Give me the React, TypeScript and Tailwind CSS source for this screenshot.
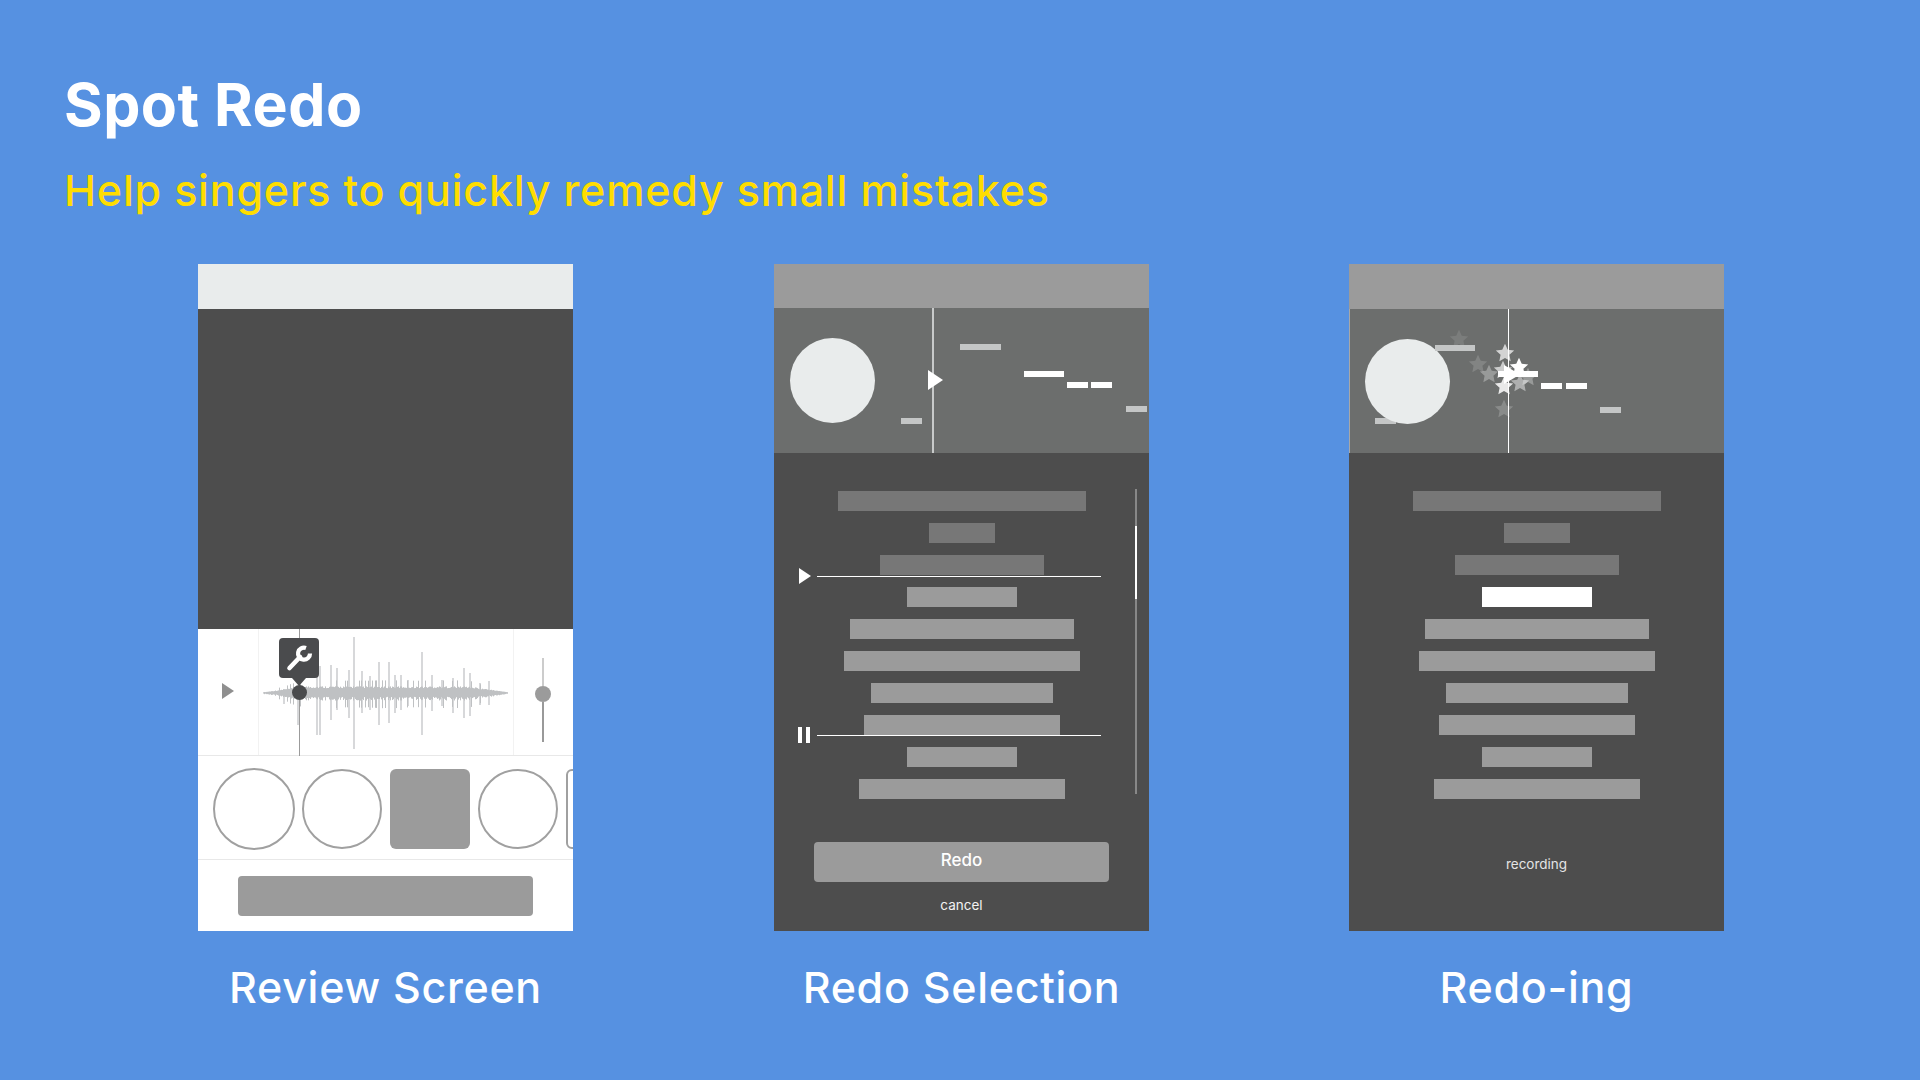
const LYRICS = [248, 66, 164, 110, 224, 236, 182, 196, 110, 206];

// spikes read off the reference: x offset, top and bottom distance from the centre line
const SPIKES: [number, number, number][] = [
  [21, 4, 11], [35, 7, 32], [54, 20, 42], [57, 27, 42], [68, 28, 27], [74, 25, 17], [86, 23, 25], [91, 56, 56],
  [99, 22, 20], [107, 17, 17], [116, 31, 32], [126, 31, 30], [132, 18, 20], [138, 18, 17], [145, 13, 13],
  [159, 41, 42], [169, 18, 18], [179, 13, 13], [190, 15, 20], [201, 25, 25], [207, 20, 23], [217, 10, 12], [226, 12, 12],
];

function Waveform() {
  const bars: [number, number, number][] = [];
  for (let i = 0; i < 245; i++) {
    const edge = Math.min(i / 40, (245 - i) / 40, 1);
    const noise = Math.abs(Math.sin(i * 12.9898) * 43758.5453) % 1;
    const kick = noise > 0.86 ? 1.9 : 1;
    const h = 0.7 + edge * 5.5 * (0.75 + noise * 0.4) * kick;
    bars.push([i + 0.5, h, h * (0.8 + noise * 0.4)]);
  }
  return (
    <svg width="245" height="120" viewBox="0 0 245 120" className="block">
      {SPIKES.map(([x, t, b], i) => (
        <line key={i} x1={x} x2={x} y1={60 - t} y2={60 + b} stroke="#cdcfd1" strokeWidth="1.6" />
      ))}
      {bars.map(([x, t, b], i) => (
        <line key={i} x1={x} x2={x} y1={60 - t} y2={60 + b} stroke="#bfc1c3" strokeWidth="1" />
      ))}
    </svg>
  );
}

function Tri({ className }: { className: string }) {
  return (
    <svg viewBox="0 0 12 16" preserveAspectRatio="none" className={className}>
      <path d="M0 0L12 8L0 16Z" fill="currentColor" />
    </svg>
  );
}

function Star({ x, y, opacity }: { x: number; y: number; opacity: number }) {
  return (
    <svg
      viewBox="0 0 24 24"
      width={20}
      height={20}
      className="absolute text-white"
      style={{ left: x - 10, top: y - 10, opacity }}
    >
      <path d="M12 1l3.300 7 7.700.9-5.700 5.300 1.500 7.600L12 18l-6.800 3.800 1.500-7.600L1 8.900 8.700 8z" fill="currentColor" />
    </svg>
  );
}

function Note({ x, y, w, dim }: { x: number; y: number; w: number; dim?: boolean }) {
  return (
    <div
      className={dim ? "absolute h-[6px] bg-[#c4c6c6]" : "absolute h-[6px] bg-white"}
      style={{ left: x, top: y, width: w }}
    />
  );
}

function Lyrics({ highlight }: { highlight?: boolean }) {
  return (
    <div className="flex flex-col items-center gap-3 pt-[38px]">
      {LYRICS.map((w, i) => {
        const bg = i < 3 ? "bg-[#777777]" : highlight && i === 3 ? "bg-white" : "bg-[#9b9b9b]";
        return <div key={i} className={`h-5 ${bg}`} style={{ width: w }} />;
      })}
    </div>
  );
}

function ReviewScreen() {
  return (
    <div className="flex h-[667px] w-[375px] flex-col bg-white">
      <div className="h-[45px] shrink-0 bg-[#e9ecec]" />
      <div className="h-[320px] shrink-0 bg-[#4d4d4d]" />
      <div className="relative flex h-[127px] shrink-0 border-b border-[#e8e8e8]">
        <div className="flex w-[61px] shrink-0 items-center justify-center border-r border-[#f2f2f2] pb-[2px]">
          <Tri className="h-4 w-3 text-[#8f8f8f]" />
        </div>
        <div className="flex flex-1 items-center justify-center pr-px pt-[2px]">
          <Waveform />
        </div>
        <div className="flex w-[60px] shrink-0 flex-col items-center border-l border-[#f2f2f2] pr-px pt-[29px]">
          <div className="h-[28px] w-[2px] bg-[#cccccc]" />
          <div className="size-4 rounded-full bg-[#9b9b9b]" />
          <div className="h-[40px] w-[2px] bg-[#999999]" />
        </div>
        <div className="absolute bottom-[-1px] left-[101px] top-0 w-px bg-[#9b9b9b]" />
        <div className="absolute left-[81px] top-[9px] flex w-10 flex-col items-center">
          <div className="flex size-10 items-center justify-center rounded bg-[#4a4b4d]">
            <svg viewBox="0 0 40 40" className="size-10" fill="none" stroke="white" strokeWidth="4.200">
              <path d="M10.500 30L21 19" strokeLinecap="round" strokeWidth="4.600" />
              <path d="M27 10A6 6 0 1 0 31 15.500" />
            </svg>
          </div>
          <svg viewBox="0 0 14 8" className="h-2 w-[14px]">
            <path d="M0 0H14L7 8Z" fill="#4a4b4d" />
          </svg>
          <div className="-mt-px size-[15px] rounded-full bg-[#4a4b4d]" />
        </div>
      </div>
      <div className="flex h-[104px] shrink-0 items-center gap-2 overflow-hidden border-b border-[#e8e8e8] pl-[15px] pt-[2px]">
        <div className="-mr-px size-[82px] shrink-0 rounded-full border-2 border-[#a0a0a0]" />
        <div className="size-20 shrink-0 rounded-full border-2 border-[#a0a0a0]" />
        <div className="size-20 shrink-0 rounded-md bg-[#9b9b9b]" />
        <div className="size-20 shrink-0 rounded-full border-2 border-[#a0a0a0]" />
        <div className="h-20 w-20 shrink-0 rounded-md border-2 border-[#a0a0a0]" />
      </div>
      <div className="flex flex-1 justify-center pt-4">
        <div className="h-10 w-[295px] rounded bg-[#9b9b9b]" />
      </div>
    </div>
  );
}

function RedoSelection() {
  return (
    <div className="flex h-[667px] w-[375px] flex-col bg-[#4d4d4d]">
      <div className="h-11 shrink-0 bg-[#9b9b9b]" />
      <div className="relative h-[145px] shrink-0 bg-[#6c6e6d]">
        <div className="absolute left-4 top-[30px] size-[85px] rounded-full bg-[#e9ecec]" />
        <Note x={186} y={36} w={41} dim />
        <Note x={127} y={110} w={21} dim />
        <Note x={250} y={63} w={40} />
        <Note x={293} y={74} w={21} />
        <Note x={317} y={74} w={21} />
        <Note x={352} y={98} w={21} dim />
        <div className="absolute left-[158px] top-0 h-full w-[2px] bg-[#c8caca]" />
        <Tri className="absolute left-[154px] top-[62px] h-5 w-[15px] text-white" />
      </div>
      <div className="relative flex flex-1 flex-col items-center">
        <div className="w-full">
          <Lyrics />
        </div>
        <div className="absolute left-[25px] top-[115px] flex items-center gap-[6px]">
          <Tri className="h-4 w-3 text-white" />
          <div className="h-px w-[284px] bg-white" />
        </div>
        <div className="absolute left-6 top-[274px] flex items-center">
          <div className="flex h-4 w-3 justify-between">
            <div className="w-1 bg-white" />
            <div className="w-1 bg-white" />
          </div>
          <div className="ml-[7px] mt-[1px] h-px w-[284px] bg-white" />
        </div>
        <div className="absolute left-[361px] top-[36px] h-[305px] w-[2px] bg-[#888888]">
          <div className="mt-[37px] h-[73px] w-[2px] bg-white" />
        </div>
        <div className="mt-[43px] flex h-10 w-[295px] items-center justify-center rounded bg-[#9b9b9b] pb-[3px] text-[17px] font-medium text-white">
          Redo
        </div>
        <div className="mt-[13px] text-[13.500px] leading-5 text-[#f2f2f2]">cancel</div>
      </div>
    </div>
  );
}

function Redoing() {
  return (
    <div className="flex h-[667px] w-[375px] flex-col bg-[#4d4d4d]">
      <div className="h-[45px] shrink-0 bg-[#9b9b9b]" />
      <div className="relative h-[144px] shrink-0 border-l border-[#a8a8a8] bg-[#6c6e6d]">
        <Star x={109} y={30} opacity={0.1} />
        <Star x={128} y={55} opacity={0.15} />
        <Star x={139} y={65} opacity={0.3} />
        <Star x={178} y={68} opacity={0.3} />
        <Star x={154} y={100} opacity={0.2} />
        <Star x={170} y={74} opacity={0.45} />
        <Star x={155} y={44} opacity={0.7} />
        <Star x={153} y={61} opacity={0.65} />
        <Star x={154} y={77} opacity={0.85} />
        <Star x={169} y={58} opacity={1} />
        <Note x={25} y={109} w={21} dim />
        <div className="absolute left-[15px] top-[30px] size-[85px] rounded-full bg-[#e9ecec]" />
        <Note x={85} y={36} w={40} dim />
        <Note x={148} y={62} w={40} />
        <Note x={191} y={74} w={21} />
        <Note x={216} y={74} w={21} />
        <Note x={250} y={98} w={21} dim />
        <div className="absolute left-[158px] top-0 h-full w-px bg-white" />
        <Tri className="absolute left-[154px] top-[56px] h-[19px] w-4 text-white" />
      </div>
      <div className="flex-1">
        <Lyrics highlight />
        <div className="pt-[55px] text-center text-[13.500px] leading-5 text-[#e4e4e4]">recording</div>
      </div>
    </div>
  );
}

function Column({ label, className, children }: { label: string; className?: string; children: React.ReactNode }) {
  return (
    <div className={`flex w-[375px] flex-col items-center ${className ?? ""}`}>
      {children}
      <div className="mt-[26px] whitespace-nowrap text-[43px] font-medium leading-[60px] tracking-[0.7px] text-white">
        {label}
      </div>
    </div>
  );
}

export default function App() {
  return (
    <div className="h-[1080px] w-[1920px] overflow-hidden bg-[#5691e1] font-['Inter',sans-serif]">
      <div className="pl-16 pt-[69px]">
        <h1 className="text-[59px] font-bold leading-[72px] tracking-[0.5px] text-white">Spot Redo</h1>
        <p className="mt-[21px] text-[43px] font-medium leading-[56px] tracking-[0.8px] text-[#ffdd00]">
          Help singers to quickly remedy small mistakes
        </p>
      </div>
      <div className="mt-[46px] flex gap-[200px] pl-[198px]">
        <Column label="Review Screen">
          <ReviewScreen />
        </Column>
        <Column label="Redo Selection" className="ml-px">
          <RedoSelection />
        </Column>
        <Column label="Redo-ing">
          <Redoing />
        </Column>
      </div>
    </div>
  );
}
